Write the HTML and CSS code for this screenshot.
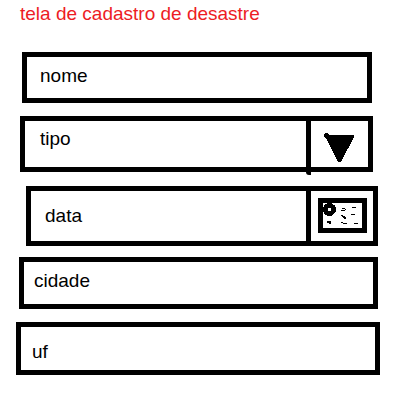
FILE: index.html
```html
<!DOCTYPE html>
<html lang="pt-BR">
<head>
<meta charset="utf-8">
<title>Cadastro de desastre</title>
<link rel="stylesheet" href="styles.css">
</head>
<body>
<main class="screen">
  <h1 class="title">tela de cadastro de desastre</h1>
  <form class="form">
    <div class="field nome"><span class="label">nome</span></div>
    <div class="field tipo">
      <span class="label">tipo</span>
      <span class="action">
        <svg class="arrow" width="31" height="31" viewBox="0 0 31 31" shape-rendering="crispEdges">
          <circle cx="2.5" cy="2.5" r="2.5"/>
          <path d="M3.5 3.7H28L15.5 27.2Z" stroke="#000" stroke-width="4" stroke-linejoin="round"/>
        </svg>
      </span>
    </div>
    <div class="field data">
      <span class="label">data</span>
      <span class="action">
        <svg class="calendar" width="49" height="35" viewBox="0 0 49 35" shape-rendering="crispEdges">
          <rect x="2.5" y="2.5" width="44" height="30" fill="none" stroke="#000" stroke-width="5"/>
          <circle cx="11.5" cy="11.5" r="4.1" fill="none" stroke="#000" stroke-width="4.8"/>
          <path d="M24 10h3v1h1v1h-1v1h-4v-1h4v-1h-3zM34 9h4v1h-4zM33 16h4v1h-4zM23 17h2v1h2v1h1v2h-2v-1h-1v-1h-1v-1h-1zM9 23h4v3h-2v-1h-2zM23 24h2v1h4v1h-4v-1h-2zM36 25h4v1h-4z"/>
        </svg>
      </span>
    </div>
    <div class="field cidade"><span class="label">cidade</span></div>
    <div class="field uf"><span class="label">uf</span></div>
  </form>
</main>
</body>
</html>
```
FILE: styles.css
```css
* {
  box-sizing: border-box;
}

body {
  margin: 0;
  background: #fff;
  color: #000;
  font: 19px/20px "Liberation Sans", Arial, sans-serif;
}

.screen {
  height: 409px;
  padding: 4px 0 0 16px;
}

.title {
  margin: 0 0 28px 4px;
  color: #ed1c24;
  font-size: inherit;
  font-weight: 400;
}

.field {
  display: flex;
  justify-content: space-between;
  border: 5px solid #000;
}

.nome {
  width: 350px;
  height: 51px;
  margin: 0 0 13px 6px;
  padding: 9px 0 0 13px;
}

.tipo {
  width: 353px;
  height: 56px;
  margin: 0 0 14px 4px;
  padding-left: 15px;
}

.tipo .label {
  padding-top: 8px;
}

.data {
  width: 352px;
  height: 60px;
  margin: 0 0 11px 10px;
  padding-left: 14px;
}

.data .label {
  padding-top: 15px;
}

.cidade {
  width: 359px;
  height: 52px;
  margin: 0 0 13px 3px;
  padding: 9px 0 0 10px;
}

.uf {
  width: 364px;
  height: 53px;
  padding: 15px 0 0 11px;
}

.action {
  border-left: 5px solid #000;
}

.tipo .action {
  width: 62px;
  height: 54px;
  padding: 12px 0 0 13px;
  border-bottom-left-radius: 3px;
}

.data .action {
  width: 67px;
  padding: 7px 0 0 7px;
}

.action svg {
  display: block;
}
```
